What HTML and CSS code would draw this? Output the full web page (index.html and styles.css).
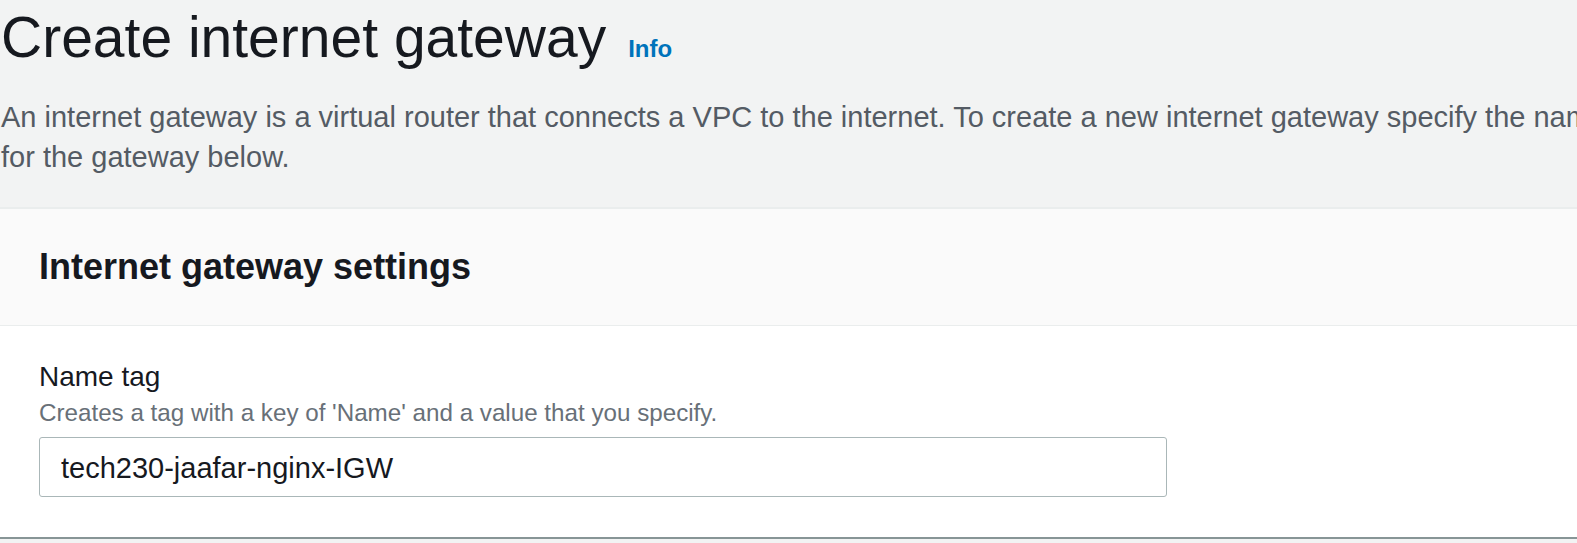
FILE: index.html
```html
<!DOCTYPE html>
<html lang="en">
<head>
<meta charset="utf-8">
<title>Create internet gateway</title>
<link rel="stylesheet" href="styles.css">
</head>
<body>
<div class="page">
  <header class="page-header">
    <div class="title-row">
      <h1 class="title">Create internet gateway</h1>
      <a class="info-link" href="#">Info</a>
    </div>
    <p class="page-desc">An internet gateway is a virtual router that connects a VPC to the internet. To create a new internet gateway specify the name<br>for the gateway below.</p>
  </header>
  <section class="card">
    <div class="card-header">
      <h2 class="card-title">Internet gateway settings</h2>
    </div>
    <div class="card-body">
      <label class="field-label" for="nametag">Name tag</label>
      <div class="field-desc">Creates a tag with a key of 'Name' and a value that you specify.</div>
      <input class="text-input" id="nametag" type="text" value="tech230-jaafar-nginx-IGW">
    </div>
  </section>
</div>
</body>
</html>
```

FILE: styles.css
```css
html, body {
  margin: 0;
  padding: 0;
  overflow: hidden;
  background: #f2f3f3;
  font-family: "Liberation Sans", Arial, sans-serif;
  color: #16191f;
}

.page {
  display: flex;
  flex-direction: column;
}

.page-header {
  padding: 2px 0 30px 1px;
  border-bottom: 2px solid #eaeded;
}

.title-row {
  display: flex;
  align-items: baseline;
  gap: 22px;
}

.title {
  margin: 0;
  font-size: 57px;
  line-height: 70px;
  font-weight: 400;
  color: #16191f;
}

.info-link {
  font-size: 24px;
  font-weight: 700;
  color: #0073bb;
  text-decoration: none;
}

.page-desc {
  margin: 25px 0 0;
  font-size: 29px;
  line-height: 40px;
  color: #545b64;
  white-space: nowrap;
}

.card {
  background: #ffffff;
  border-bottom: 2px solid #879596;
}

.card-header {
  background: #fafafa;
  padding: 36px 39px;
  border-bottom: 1px solid #eaeded;
}

.card-title {
  margin: 0;
  font-size: 36px;
  line-height: 44px;
  font-weight: 700;
  color: #16191f;
}

.card-body {
  display: flex;
  flex-direction: column;
  align-items: flex-start;
  padding: 34px 39px 40px;
}

.field-label {
  font-size: 28px;
  line-height: 34px;
  color: #16191f;
}

.field-desc {
  margin-top: 4px;
  font-size: 24.2px;
  line-height: 30px;
  color: #687078;
}

.text-input {
  box-sizing: border-box;
  margin-top: 9px;
  width: 1128px;
  height: 60px;
  padding: 2px 21px 0;
  border: 1px solid #aab7b8;
  border-radius: 3px;
  background: #ffffff;
  font-family: "Liberation Sans", Arial, sans-serif;
  font-size: 29px;
  color: #16191f;
  outline: none;
}
```
